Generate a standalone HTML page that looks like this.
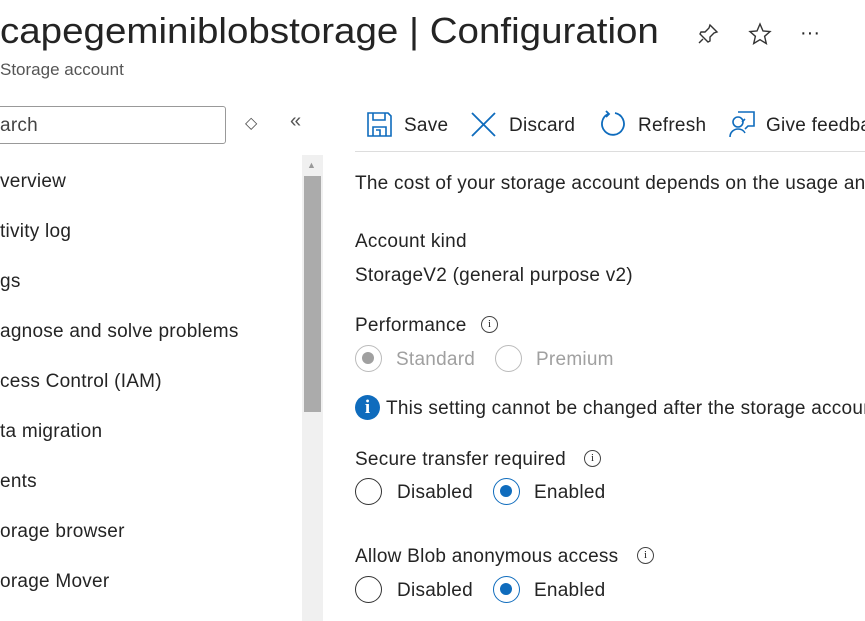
<!DOCTYPE html>
<html><head><meta charset="utf-8"><style>
*{margin:0;padding:0;box-sizing:border-box}
html,body{width:865px;height:621px;overflow:hidden}
body{background:#fff;font-family:"Liberation Sans",sans-serif;color:#242424;position:relative}
#w{position:absolute;left:0;top:0;width:865px;height:621px;overflow:hidden}
.a{position:absolute;white-space:nowrap}
.t{font-size:19px;letter-spacing:0.25px}
.rad{position:absolute;width:27px;height:27px;border-radius:50%;border:1.5px solid #333;background:#fff}
.rad.on{border-color:#0f6cbd}
.rad.on:after{content:"";position:absolute;left:6px;top:6px;width:12px;height:12px;border-radius:50%;background:#0f6cbd}
.rad.dis{border-color:#bbb}
.rad.dis.on:after{background:#a0a0a0}
.info{position:absolute;width:17px;height:17px;border-radius:50%;border:1.3px solid #444;font-size:11px;text-align:center;line-height:15px;font-family:"Liberation Serif",serif}
</style></head><body><div id="w">
<div class="a" style="left:0;top:10px;font-size:36px;transform:scaleX(1.07);transform-origin:0 0">capegeminiblobstorage | Configuration</div>
<div class="a" style="left:0;top:60px;font-size:17px;color:#555">Storage account</div>
<svg class="a" style="left:696px;top:22px" width="24" height="24" viewBox="0 0 24 24" fill="none" stroke="#333" stroke-width="1.4"><path d="M14 3l7 7-3 1-4 4 0 4-2 1-8-8 1-2 4 0 4-4z M7 17l-4 4"/></svg>
<svg class="a" style="left:748px;top:22px" width="24" height="24" viewBox="0 0 24 24" fill="none" stroke="#333" stroke-width="1.4"><path d="M12 2l3 7 7 .6-5.4 4.7 1.7 7.2L12 17.7 5.7 21.5l1.7-7.2L2 9.6 9 9z"/></svg>
<div class="a" style="left:800px;top:22px;font-size:20px">···</div>
<div class="a" style="left:-5px;top:106px;width:231px;height:38px;border:1px solid #999;border-radius:3px"></div>
<div class="a t" style="left:0;top:115px;color:#444">arch</div>
<div class="a" style="left:245px;top:113px;font-size:16px;color:#555">◇</div>
<div class="a" style="left:290px;top:110px;font-size:20px;color:#555">«</div>
<svg class="a" style="left:366px;top:111px" width="27" height="27" viewBox="0 0 27 27" fill="none" stroke="#0f6cbd" stroke-width="1.6"><path d="M2 2h20l3 3v20H2z M7 2v7h12V2 M7 25v-9h13v9 M10 19h4v6"/></svg>
<div class="a t" style="left:404px;top:115px">Save</div>
<svg class="a" style="left:470px;top:111px" width="27" height="27" viewBox="0 0 27 27" stroke="#0f6cbd" stroke-width="1.8"><path d="M2 2l23 23M25 2L2 25"/></svg>
<div class="a t" style="left:509px;top:115px">Discard</div>
<svg class="a" style="left:599px;top:110px" width="27" height="29" viewBox="0 0 27 29" fill="none" stroke="#0f6cbd" stroke-width="1.8"><path d="M9 4A11 11 0 1 0 16 3 M7 1l3 3-3 3"/></svg>
<div class="a t" style="left:638px;top:115px">Refresh</div>
<svg class="a" style="left:728px;top:110px" width="28" height="28" viewBox="0 0 28 28" fill="none" stroke="#0f6cbd" stroke-width="1.6"><path d="M10 2h16v14h-6l-3 3 M14 12l3-3 M5 12a5 5 0 1 0 10 0a5 5 0 1 0-10 0 M2 27c0-5 4-8 8-8s6 2 7 4"/></svg>
<div class="a t" style="left:766px;top:115px">Give feedback</div>
<div class="a" style="left:355px;top:151px;width:510px;height:1px;background:#ddd"></div>
<div class="a" style="left:302px;top:155px;width:21px;height:466px;background:#f0f0f0"></div>
<div class="a" style="left:304px;top:176px;width:17px;height:236px;background:#ababab"></div>
<div class="a" style="left:307px;top:160px;font-size:9px;color:#999">▲</div>
<div class="a t" style="left:0;top:171px">verview</div>
<div class="a t" style="left:0;top:221px">tivity log</div>
<div class="a t" style="left:0;top:271px">gs</div>
<div class="a t" style="left:0;top:321px">agnose and solve problems</div>
<div class="a t" style="left:0;top:371px">cess Control (IAM)</div>
<div class="a t" style="left:0;top:421px">ta migration</div>
<div class="a t" style="left:0;top:471px">ents</div>
<div class="a t" style="left:0;top:521px">orage browser</div>
<div class="a t" style="left:0;top:571px">orage Mover</div>
<div class="a t" style="left:355px;top:173px">The cost of your storage account depends on the usage and the options</div>
<div class="a t" style="left:355px;top:231px">Account kind</div>
<div class="a t" style="left:355px;top:265px">StorageV2 (general purpose v2)</div>
<div class="a t" style="left:355px;top:315px">Performance</div>
<div class="info" style="left:481px;top:316px">i</div>
<div class="rad dis on" style="left:355px;top:345px"></div>
<div class="a t" style="left:396px;top:349px;color:#a0a0a0">Standard</div>
<div class="rad dis" style="left:495px;top:345px"></div>
<div class="a t" style="left:536px;top:349px;color:#a0a0a0">Premium</div>
<div class="a" style="left:355px;top:395px;width:25px;height:25px;border-radius:50%;background:#0f6cbd;color:#fff;font-weight:bold;font-family:'Liberation Serif',serif;font-size:19px;text-align:center;line-height:25px">i</div>
<div class="a t" style="left:386px;top:398px">This setting cannot be changed after the storage account is created.</div>
<div class="a t" style="left:355px;top:449px">Secure transfer required</div>
<div class="info" style="left:584px;top:450px">i</div>
<div class="rad" style="left:355px;top:478px"></div>
<div class="a t" style="left:397px;top:482px">Disabled</div>
<div class="rad on" style="left:493px;top:478px"></div>
<div class="a t" style="left:534px;top:482px">Enabled</div>
<div class="a t" style="left:355px;top:546px">Allow Blob anonymous access</div>
<div class="info" style="left:637px;top:547px">i</div>
<div class="rad" style="left:355px;top:576px"></div>
<div class="a t" style="left:397px;top:580px">Disabled</div>
<div class="rad on" style="left:493px;top:576px"></div>
<div class="a t" style="left:534px;top:580px">Enabled</div>
</div></body></html>
